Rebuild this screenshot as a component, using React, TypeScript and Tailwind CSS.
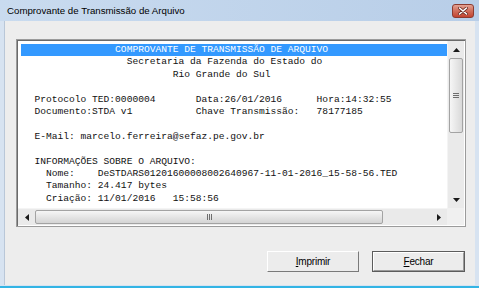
import React from "react";

const mono = { fontFamily: '"Liberation Mono", "Courier New", monospace' };

const lines: string[] = [
  "                  Secretaria da Fazenda do Estado do",
  "                          Rio Grande do Sul",
  "",
  "  Protocolo TED:0000004       Data:26/01/2016      Hora:14:32:55",
  "  Documento:STDA v1           Chave Transmissão:   78177185",
  "",
  "  E-Mail: marcelo.ferreira@sefaz.pe.gov.br",
  "",
  "  INFORMAÇÕES SOBRE O ARQUIVO:",
  "    Nome:    DeSTDARS01201600008002640967-11-01-2016_15-58-56.TED",
  "    Tamanho: 24.417 bytes",
  "    Criação: 11/01/2016   15:58:56",
];

function Arrow({ dir }: { dir: "up" | "down" | "left" | "right" }) {
  const pts: Record<string, string> = {
    up: "0,4 3.5,0 7,4",
    down: "0,0 7,0 3.5,4",
    left: "4,0 4,7 0,3.5",
    right: "0,0 0,7 4,3.5",
  };
  const vert = dir === "up" || dir === "down";
  return (
    <svg width={vert ? 7 : 4} height={vert ? 4 : 7} viewBox={vert ? "0 0 7 4" : "0 0 4 7"}>
      <polygon points={pts[dir]} fill="#1a1a1a" />
    </svg>
  );
}

export default function App() {
  return (
    <div className="w-[479px] h-[288px] flex flex-col overflow-hidden bg-[#d7e3f1]">
      {/* Title bar */}
      <div className="h-[21px] flex items-center justify-between pl-[7px] pr-[5px] bg-gradient-to-r from-[#c9dbef] to-[#b8cee8] shrink-0">
        <span
          className="text-[9.7px] text-black leading-none pt-[1px]"
          style={{ fontFamily: '"Liberation Sans", Arial, sans-serif' }}
        >
          Comprovante de Transmissão de Arquivo
        </span>
        <div className="w-[22px] h-[14px] mt-[1px] rounded-[3px] border border-[#8c3b30] bg-gradient-to-b from-[#e3a293] via-[#d06d5b] to-[#c2432f] flex items-center justify-center">
          <svg width="10" height="8" viewBox="0 0 10 8">
            <path d="M1.5 1 L8.5 7 M8.5 1 L1.5 7" stroke="#6b2a20" strokeWidth="3" strokeLinecap="round" />
            <path d="M1.5 1 L8.5 7 M8.5 1 L1.5 7" stroke="#ffffff" strokeWidth="1.6" strokeLinecap="round" />
          </svg>
        </div>
      </div>

      {/* Body */}
      <div className="flex-1 flex flex-col mx-[4px] bg-[#ededed] pl-[11px] pr-[10px] pt-[18px] border-l border-[#b9c7d8]">
        {/* Text box */}
        <div className="w-[450px] h-[188px] border border-[#9b9b9b] bg-white">
          <div className="w-full h-full border-l border-t border-[#6a6a6a] flex flex-col">
            <div className="flex h-[167px]">
              {/* Text pane */}
              <div className="w-[429px] h-full overflow-hidden pl-[3px] pt-[3px] bg-white" style={mono}>
                <div className="bg-[#3399ff] text-white text-[9.6px] leading-[12.4px] h-[12.4px] pl-[2px] whitespace-pre">
                  {"                COMPROVANTE DE TRANSMISSÃO DE ARQUIVO"}
                </div>
                {lines.map((l, i) => (
                  <div key={i} className="text-[9.6px] leading-[12.4px] pl-[2px] whitespace-pre text-[#111111] h-[12.4px]">
                    {l}
                  </div>
                ))}
              </div>
              {/* Vertical scrollbar */}
              <div className="w-[17px] h-full bg-[#eaeaea] flex flex-col border-l border-[#f4f4f4]">
                <div className="h-[17px] flex items-center justify-center">
                  <Arrow dir="up" />
                </div>
                <div className="mx-[1px] h-[75px] rounded-[2px] border border-[#a3a3a3] bg-gradient-to-r from-[#f6f6f6] to-[#d9d9d9] flex items-center justify-center">
                  <div className="flex flex-col gap-[1px]">
                    <div className="w-[6px] h-[1px] bg-[#6e6e6e]" />
                    <div className="w-[6px] h-[1px] bg-[#6e6e6e]" />
                    <div className="w-[6px] h-[1px] bg-[#6e6e6e]" />
                  </div>
                </div>
                <div className="flex-1" />
                <div className="h-[17px] flex items-center justify-center">
                  <Arrow dir="down" />
                </div>
              </div>
            </div>
            <div className="flex h-[17px]">
              {/* Horizontal scrollbar */}
              <div className="w-[429px] h-full bg-[#eaeaea] flex items-stretch border-t border-[#f4f4f4]">
                <div className="w-[17px] flex items-center justify-center">
                  <Arrow dir="left" />
                </div>
                <div className="w-[348px] my-[1px] rounded-[2px] border border-[#a3a3a3] bg-gradient-to-b from-[#f6f6f6] to-[#d4d4d4] flex items-center justify-center">
                  <div className="flex gap-[1px]">
                    <div className="w-[1px] h-[6px] bg-[#6e6e6e]" />
                    <div className="w-[1px] h-[6px] bg-[#6e6e6e]" />
                    <div className="w-[1px] h-[6px] bg-[#6e6e6e]" />
                  </div>
                </div>
                <div className="flex-1" />
                <div className="w-[17px] flex items-center justify-center">
                  <Arrow dir="right" />
                </div>
              </div>
              <div className="w-[17px] h-full bg-[#f0f0f0]" />
            </div>
          </div>
        </div>

        {/* Buttons */}
        <div
          className="flex justify-end gap-[13px] mt-[24px] text-[10px] tracking-[-0.2px] text-black"
          style={{ fontFamily: '"Liberation Sans", Arial, sans-serif' }}
        >
          <div className="w-[92px] h-[21px] border-t border-l border-[#ffffff] border-r border-b border-r-[#7a7a7a] border-b-[#7a7a7a] bg-[#ececec] flex items-center justify-center">
            <span>
              <span className="underline">I</span>mprimir
            </span>
          </div>
          <div className="w-[93px] h-[21px] border border-[#5c5c5c] bg-[#ececec]">
            <div className="w-full h-full border-t border-l border-white border-r border-b border-r-[#9a9a9a] border-b-[#9a9a9a] flex items-center justify-center">
              <span>
                <span className="underline">F</span>echar
              </span>
            </div>
          </div>
        </div>
      </div>

      {/* Bottom frame */}
      <div className="h-[3px] shrink-0 bg-[#d7e3f1] border-b-2 border-[#33b4e4]" />
    </div>
  );
}
